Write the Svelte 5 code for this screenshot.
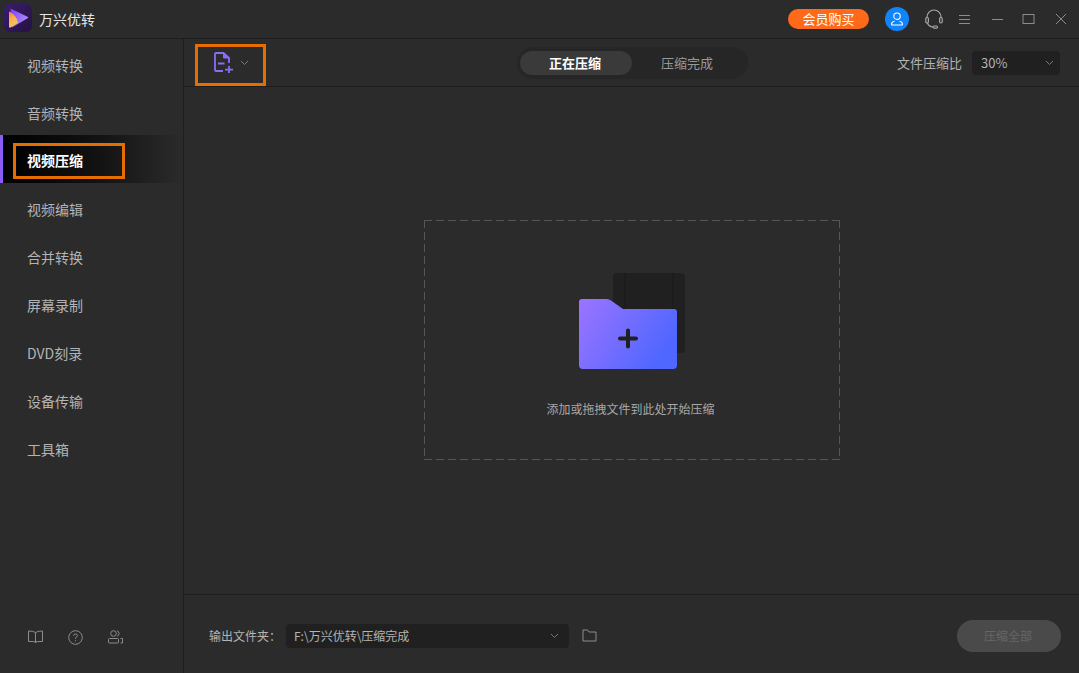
<script>
  const navItems = ["视频转换", "音频转换", "视频压缩", "视频编辑", "合并转换", "屏幕录制", "DVD刻录", "设备传输", "工具箱"];
  let current = "视频压缩";
  let tab = "doing";
</script>

<div class="window">
  <header class="titlebar">
    <div class="brand">
      <svg class="logo" width="28" height="28" viewBox="0 0 28 28">
        <defs>
          <linearGradient id="logoBg" x1="0" y1="0" x2="1" y2="1">
            <stop offset="0" stop-color="#3a1c6e" />
            <stop offset="1" stop-color="#24123f" />
          </linearGradient>
          <linearGradient id="logoPlay" x1="0" y1="0" x2="1" y2="0.6">
            <stop offset="0" stop-color="#7b3ff2" />
            <stop offset="1" stop-color="#b18cff" />
          </linearGradient>
          <linearGradient id="logoLeft" x1="0" y1="0" x2="0.4" y2="1">
            <stop offset="0" stop-color="#f57a6a" />
            <stop offset="0.5" stop-color="#fbb04a" />
            <stop offset="1" stop-color="#f9c25c" />
          </linearGradient>
        </defs>
        <rect width="28" height="28" rx="6" fill="url(#logoBg)" />
        <path d="M6.5 4.500 L24 13 Q24.500 13.500 24 14 L8 23.500 Z" fill="url(#logoPlay)" />
        <path d="M5.500 7.500 Q13 12 14 19 L6.500 23.500 Q5 24 5 22.500 L5 8 Q5 7.500 5.500 7.500Z" fill="url(#logoLeft)" />
      </svg>
      <span>万兴优转</span>
    </div>
    <div class="controls">
      <button class="buy">会员购买</button>
      <span class="avatar">
        <svg width="14" height="14" viewBox="0 0 14 14" fill="none" stroke="#fff" stroke-width="1.1">
          <circle cx="7" cy="4.2" r="3.2" />
          <path d="M1.5 13 Q1.5 9.6 4.6 9.2 M12.5 13 Q12.5 9.6 9.4 9.2 M1.500 13 H12.500" />
        </svg>
      </span>
      <svg class="headset" width="18" height="20" viewBox="0 0 18 20" fill="none" stroke="#a8a8a8" stroke-width="1.2">
        <path d="M2 8.500 V8 A7 7 0 0 1 16 8 V8.500" />
        <rect x="0.800" y="8.500" width="2.600" height="5.500" rx="1.200" />
        <rect x="14.600" y="8.500" width="2.600" height="5.500" rx="1.200" />
        <path d="M2.500 14 Q3.500 17.500 8 18" />
        <rect x="8" y="17" width="4.500" height="2.200" rx="1.100" />
      </svg>
      <svg class="menu" width="13" height="11" viewBox="0 0 13 11" stroke="#8c8c8c">
        <path d="M1 1.500 H12 M1 5.500 H12 M1 9.500 H12" />
      </svg>
      <svg class="min" width="12" height="12" viewBox="0 0 12 12" stroke="#8c8c8c">
        <path d="M0 6.500 H11" />
      </svg>
      <svg class="max" width="13" height="12" viewBox="0 0 13 12" fill="none" stroke="#8c8c8c">
        <rect x="1" y="1.500" width="11" height="9" />
      </svg>
      <svg class="close" width="12" height="12" viewBox="0 0 12 12" stroke="#8c8c8c">
        <path d="M1 1 L11 11 M11 1 L1 11" />
      </svg>
    </div>
  </header>

  <div class="body">
    <aside class="sidebar">
      <nav>
        {#each navItems as item}
          <div class="nav-item" class:active={item === current}>
            <span class="nav-label">{item}</span>
            {#if item === current}<span class="mark nav-mark"></span>{/if}
          </div>
        {/each}
      </nav>
      <div class="side-foot">
        <svg width="15" height="14" viewBox="0 0 15 14" fill="none" stroke="#8c8c8c">
          <path d="M7.500 2.500 Q5.500 1 0.500 1 V11.500 H5.500 Q7.500 11.500 7.500 13 Q7.500 11.500 9.500 11.500 H14.500 V1 Q9.500 1 7.500 2.500 V13" />
        </svg>
        <svg width="15" height="15" viewBox="0 0 15 15" fill="none" stroke="#8c8c8c">
          <circle cx="7.500" cy="7.500" r="6.800" />
          <path d="M5.600 5.800 Q5.600 4 7.500 4 Q9.400 4 9.400 5.600 Q9.400 6.700 8.200 7.200 Q7.500 7.600 7.500 8.800 M7.500 10.200 V11.200" />
        </svg>
        <svg width="15" height="14" viewBox="0 0 15 14" fill="none" stroke="#8c8c8c">
          <circle cx="5.500" cy="3.500" r="2.800" />
          <path d="M9 0.800 A2.800 2.800 0 0 1 9 6.200" />
          <rect x="0.500" y="8.500" width="10" height="4.500" rx="1" />
          <path d="M12.500 8.500 H14.500 V13 H12.500" />
        </svg>
      </div>
    </aside>

    <main class="content">
      <div class="toolbar">
        <div class="add-file">
          <svg width="20" height="21" viewBox="0 0 20 21" fill="none" stroke="#8b6cf8" stroke-width="1.8">
            <path d="M9 19 H2 Q1 19 1 18 V2 Q1 1 2 1 H9.500 L15 6 V11" />
            <path d="M9.500 1 L15 6 H9.500Z" fill="#8b6cf8" stroke-width="1" />
            <path d="M4 11.500 H10.500 M11 17.700 H19 M15 14 V21" />
          </svg>
          <svg class="caret" width="9" height="6" viewBox="0 0 9 6" fill="none" stroke="#777">
            <path d="M1 1 L4.500 4.500 L8 1" />
          </svg>
          <span class="mark"></span>
        </div>
        <div class="tabs">
          <button class:on={tab === "doing"} on:click={() => (tab = "doing")}>正在压缩</button>
          <button class:on={tab === "done"} on:click={() => (tab = "done")}>压缩完成</button>
        </div>
        <div class="ratio">
          <span>文件压缩比</span>
          <div class="select ratio-select">
            <span>30%</span>
            <svg width="9" height="6" viewBox="0 0 9 6" fill="none" stroke="#777">
              <path d="M1 1 L4.500 4.500 L8 1" />
            </svg>
          </div>
        </div>
      </div>

      <div class="stage">
        <div class="dropzone">
          <svg width="108" height="98" viewBox="0 0 108 98">
            <defs>
              <linearGradient id="folder" x1="0" y1="0" x2="1" y2="0.45">
                <stop offset="0" stop-color="#9c74ff" />
                <stop offset="1" stop-color="#5067ff" />
              </linearGradient>
            </defs>
            <rect x="35" y="1" width="72" height="80" rx="4" fill="#202020" />
            <path d="M47 1 V37 M95 1 V37" stroke="#181818" />
            <path d="M1 30 Q1 27 4 27 H29 Q31 27 33 28.500 L45 37 H96 Q99 37 99 40 V93 Q99 97 95 97 H5 Q1 97 1 93 Z" fill="url(#folder)" />
            <path d="M50 58.500 V74.500 M42 66.500 H58" stroke="#202020" stroke-width="4" stroke-linecap="round" />
          </svg>
          <p>添加或拖拽文件到此处开始压缩</p>
        </div>
      </div>

      <footer class="footer">
        <span class="out-label">输出文件夹：</span>
        <div class="select path-select">
          <span>F:\万兴优转\压缩完成</span>
          <svg width="9" height="6" viewBox="0 0 9 6" fill="none" stroke="#777">
            <path d="M1 1 L4.500 4.500 L8 1" />
          </svg>
        </div>
        <svg class="open" width="15" height="13" viewBox="0 0 15 13" fill="none" stroke="#8c8c8c">
          <path d="M1 12 V1 H5.500 L7 3 H14 V12 Z" />
        </svg>
        <button class="start" disabled>压缩全部</button>
      </footer>
    </main>
  </div>
</div>

<style>
  :global(body) {
    margin: 0;
    background: #2b2b2b;
  }
  .window {
    width: 1079px;
    height: 673px;
    display: flex;
    flex-direction: column;
    overflow: hidden;
    background: #2b2b2b;
    color: #b4b4b4;
    font-family: "Noto Sans CJK SC", "Noto Sans", sans-serif;
    font-size: 14px;
  }
  button {
    font: inherit;
    border: none;
    padding: 0;
  }
  .titlebar {
    height: 38px;
    flex: none;
    display: flex;
    align-items: center;
    justify-content: space-between;
    border-bottom: 1px solid #1e1e1e;
  }
  .brand {
    display: flex;
    align-items: center;
    gap: 7px;
    padding-left: 4px;
    color: #e6e6e6;
  }
  .logo {
    margin-top: -2px;
  }
  .controls {
    display: flex;
    align-items: center;
    padding-right: 12px;
  }
  .buy {
    width: 81px;
    height: 20px;
    border-radius: 10px;
    background: #ff6a1a;
    color: #fff;
    font-size: 13px;
    line-height: 20px;
  }
  .avatar {
    width: 24px;
    height: 24px;
    margin-left: 16px;
    border-radius: 50%;
    background: #1284fb;
    display: flex;
    align-items: center;
    justify-content: center;
  }
  .headset {
    margin-left: 16px;
  }
  .menu {
    margin-left: 15px;
  }
  .min {
    margin-left: 21px;
  }
  .max {
    margin-left: 18px;
  }
  .close {
    margin-left: 20px;
  }
  .body {
    flex: 1;
    display: flex;
    min-height: 0;
  }
  .sidebar {
    width: 183px;
    flex: none;
    display: flex;
    flex-direction: column;
    justify-content: space-between;
    border-right: 1px solid #1e1e1e;
  }
  .nav-item {
    position: relative;
    height: 48px;
    box-sizing: border-box;
    padding: 3px 0 0 27px;
    display: flex;
    align-items: center;
  }
  .nav-item.active {
    color: #fff;
    font-weight: 700;
    border-left: 3px solid #8a5cf6;
    padding-top: 1px;
    padding-left: 24px;
    background: linear-gradient(90deg, #000 0%, #111 50%, #2b2b2b 100%);
  }
  .mark {
    position: absolute;
    box-sizing: border-box;
    border: 3px solid #e66d00;
    pointer-events: none;
  }
  .nav-mark {
    left: 10px;
    top: 8px;
    width: 112px;
    height: 36px;
  }
  .side-foot {
    height: 36px;
    padding-left: 28px;
    margin-bottom: 18px;
    display: flex;
    align-items: center;
    gap: 25px;
  }
  .content {
    flex: 1;
    min-width: 0;
    display: flex;
    flex-direction: column;
  }
  .toolbar {
    height: 47px;
    flex: none;
    position: relative;
    display: flex;
    align-items: center;
    justify-content: space-between;
    border-bottom: 1px solid #1e1e1e;
    padding-right: 19px;
  }
  .add-file {
    position: relative;
    margin-left: 11px;
    width: 71px;
    height: 47px;
    box-sizing: border-box;
    padding: 0 0 0 19px;
    display: flex;
    align-items: center;
    gap: 6px;
  }
  .add-file .mark {
    left: 0;
    top: 5px;
    width: 71px;
    height: 42px;
  }
  .tabs {
    position: absolute;
    left: 333px;
    top: 8px;
    width: 231px;
    height: 32px;
    box-sizing: border-box;
    padding: 4px 3px;
    border-radius: 16px;
    background: #262626;
    display: flex;
  }
  .tabs button {
    width: 112px;
    height: 24px;
    padding: 0 2px 2px 0;
    border-radius: 12px;
    background: transparent;
    color: #999;
    font-size: 13px;
  }
  .tabs button.on {
    background: #3a3a3a;
    color: #fff;
    font-weight: 700;
  }
  .ratio {
    display: flex;
    align-items: center;
    gap: 10px;
    font-size: 13px;
  }
  .select {
    background: #202020;
    border-radius: 4px;
    display: flex;
    align-items: center;
    justify-content: space-between;
    box-sizing: border-box;
    color: #b4b4b4;
  }
  .ratio-select {
    width: 88px;
    height: 24px;
    padding: 0 6px 0 9px;
    font-size: 13px;
  }
  .stage {
    flex: 1;
    position: relative;
    display: flex;
    align-items: flex-start;
    justify-content: center;
    padding-top: 133px;
  }
  .dropzone {
    width: 416px;
    height: 240px;
    box-sizing: border-box;
    background:
      repeating-linear-gradient(90deg, #555 0 8px, transparent 8px 12px) left top / 100% 1px no-repeat,
      repeating-linear-gradient(90deg, #555 0 8px, transparent 8px 12px) left bottom / 100% 1px no-repeat,
      repeating-linear-gradient(180deg, #555 0 8px, transparent 8px 12px) left top / 1px 100% no-repeat,
      repeating-linear-gradient(180deg, #555 0 8px, transparent 8px 12px) right top / 1px 100% no-repeat;
    display: flex;
    flex-direction: column;
    align-items: center;
    padding-top: 52px;
  }
  .dropzone p {
    margin: 30px 2px 0 0;
    font-size: 12px;
    line-height: 18px;
    color: #a8a8a8;
  }
  .footer {
    height: 79px;
    flex: none;
    border-top: 1px solid #1e1e1e;
    display: flex;
    align-items: center;
    box-sizing: border-box;
    padding: 3px 18px 0 25px;
    font-size: 12px;
  }
  .out-label {
    width: 77px;
    flex: none;
  }
  .path-select {
    width: 283px;
    height: 24px;
    padding: 0 10px 0 8px;
  }
  .open {
    margin-left: 13px;
  }
  .start {
    margin-left: auto;
    width: 104px;
    height: 32px;
    padding-right: 2px;
    border-radius: 16px;
    background: #4a4a4a;
    color: #666;
    font-size: 12px;
  }
</style>
